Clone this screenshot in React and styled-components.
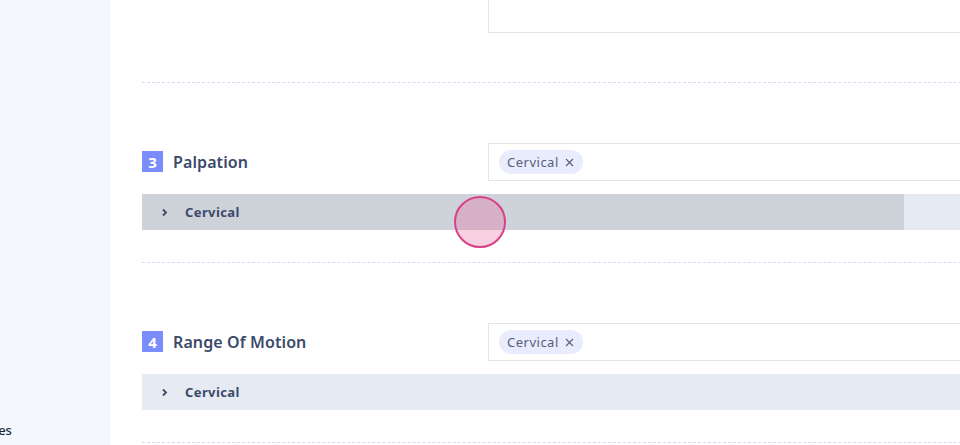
import React from 'react'
import styled, { createGlobalStyle } from 'styled-components'

const GlobalStyle = createGlobalStyle`
    body {
        margin: 0;
        font-family: "Noto Sans", "Open Sans", sans-serif;
        background: #fff;
    }
`

const Page = styled.div`
    position: relative;
    display: flex;
    width: 960px;
    height: 445px;
    overflow: hidden;
`

const Sidebar = styled.aside`
    flex: 0 0 110px;
    display: flex;
    flex-direction: column;
    justify-content: flex-end;
    background: #f4f7fe;
    overflow: hidden;
    padding-bottom: 6px;
`

const NavLabel = styled.span`
    margin-left: -52px;
    font-size: 13px;
    font-weight: 500;
    color: #1f2633;
    white-space: nowrap;
`

const Main = styled.main`
    flex: 1;
    overflow: hidden;
    padding-left: 32px;
`

const Content = styled.div`
    width: 1100px;
`

const PrevSection = styled.div`
    height: 82px;
    border-bottom: 1px dashed #d8daf3;
`

const TailBox = styled.div`
    margin-left: 346px;
    height: 32px;
    border: 1px solid #e2e4ee;
    border-top: none;
`

const Section = styled.section`
    padding: 60px 0 32px;
    border-bottom: 1px dashed #d8daf3;
`

const Header = styled.div`
    display: grid;
    grid-template-columns: 346px 1fr;
    align-items: center;
`

const Title = styled.div`
    display: flex;
    align-items: center;
    gap: 10px;
    margin-top: -1px;
    font-size: 16px;
    font-weight: 600;
    letter-spacing: 0.1px;
    color: #3b4a6b;
`

const Badge = styled.span`
    display: flex;
    align-items: center;
    justify-content: center;
    width: 21px;
    height: 21px;
    background: #7b8dfa;
    color: #fff;
    font-size: 15px;
    font-weight: 700;
`

const Field = styled.div`
    display: flex;
    align-items: center;
    height: 38px;
    box-sizing: border-box;
    border: 1px solid #e2e4ee;
    padding-left: 10px;
`

const Chip = styled.span`
    display: inline-flex;
    align-items: center;
    gap: 6px;
    height: 24px;
    padding: 0 9px 0 8px;
    border-radius: 12px;
    background: #e9ecfc;
    font-size: 13px;
    letter-spacing: 0.5px;
    color: #56607a;
`

const Row = styled.div`
    position: relative;
    display: flex;
    align-items: center;
    margin-top: 13px;
    height: 36px;
    padding-left: 19px;
    background: #e6eaf2;
    font-size: 13px;
    font-weight: 700;
    letter-spacing: 0.4px;
    color: #3b4a6b;
`

const Press = styled.span`
    position: absolute;
    left: 0;
    top: 0;
    bottom: 0;
    width: 762px;
    background: rgba(0, 0, 0, 0.1);
`

const RowText = styled.span`
    position: relative;
    display: flex;
    align-items: center;
    gap: 17px;
`

const Touch = styled.span`
    position: absolute;
    left: 454px;
    top: 196px;
    width: 52px;
    height: 52px;
    box-sizing: border-box;
    border-radius: 50%;
    border: 2px solid #d9408a;
    background: rgba(232, 100, 160, 0.3);
`

const Chevron = () => (
    <svg width="7" height="9" viewBox="0 0 7 9">
        <path d="M2 1.5 L5 4.5 L2 7.5" fill="none" stroke="#3b4a6b" strokeWidth="1.8" />
    </svg>
)

const Cross = () => (
    <svg width="9" height="9" viewBox="0 0 9 9">
        <path d="M1 1 L8 8 M8 1 L1 8" stroke="#56607a" strokeWidth="1.1" />
    </svg>
)

const sections = [
    { num: 3, title: 'Palpation', pressed: true },
    { num: 4, title: 'Range Of Motion', pressed: false },
]

export default function App() {
    return (
        <Page>
            <GlobalStyle />
            <Sidebar>
                <NavLabel>Templates</NavLabel>
            </Sidebar>
            <Main>
                <Content>
                    <PrevSection>
                        <TailBox />
                    </PrevSection>
                    {sections.map(s => (
                        <Section key={s.num}>
                            <Header>
                                <Title>
                                    <Badge>{s.num}</Badge>
                                    {s.title}
                                </Title>
                                <Field>
                                    <Chip>Cervical <Cross /></Chip>
                                </Field>
                            </Header>
                            <Row>
                                {s.pressed && <Press />}
                                <RowText>
                                    <Chevron />
                                    Cervical
                                </RowText>
                            </Row>
                        </Section>
                    ))}
                </Content>
            </Main>
            <Touch />
        </Page>
    )
}
